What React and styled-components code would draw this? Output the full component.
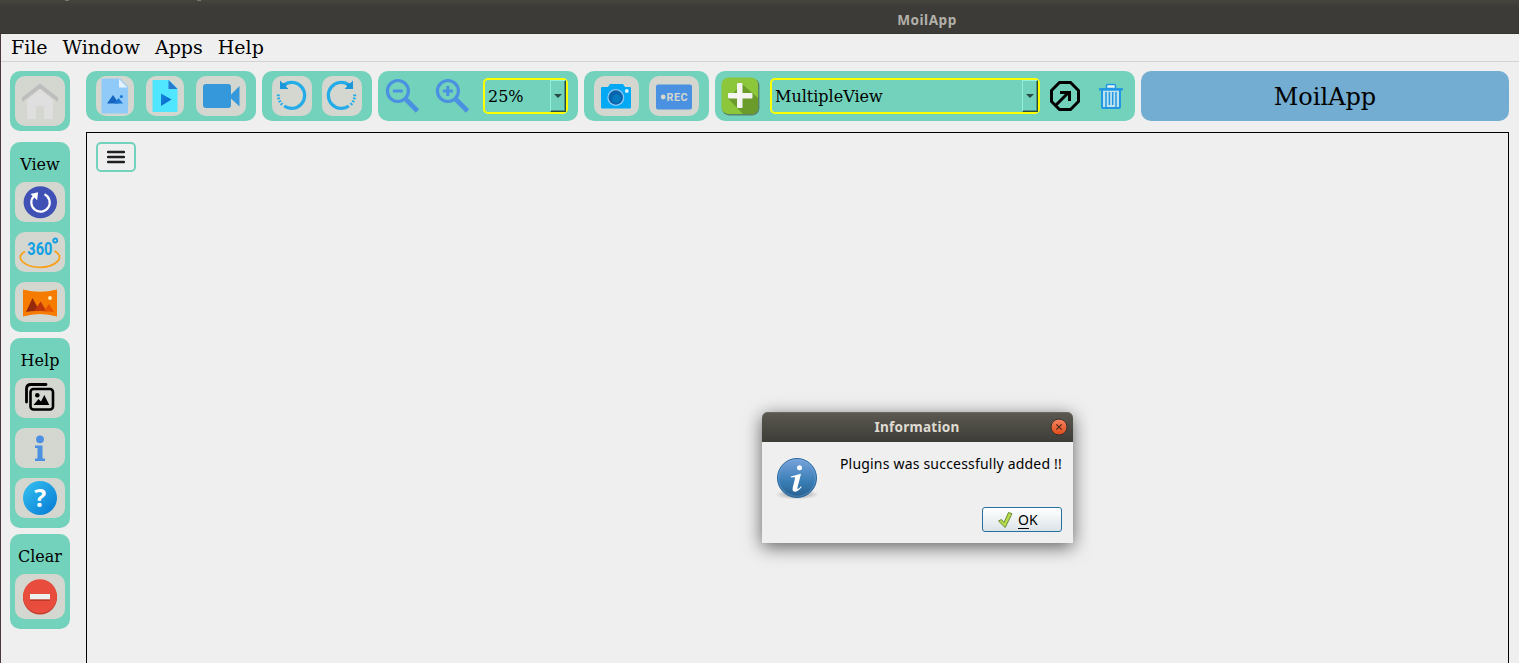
import React from "react";
import styled, { createGlobalStyle } from "styled-components";

const mint = "#73d2bb";
const serif = '"DejaVu Serif", serif';
const sans = '"Noto Sans", "Open Sans", sans-serif';

const Global = createGlobalStyle`
  * { box-sizing: border-box; }
  body { margin: 0; background: #efefef; overflow: hidden; color: #000; }
  button { font: inherit; color: inherit; padding: 0; border: 0; background: none; }
  svg { display: block; flex: none; }
`;

const Window = styled.div`
  height: 100vh;
  display: flex;
  flex-direction: column;
  font-family: ${serif};
`;
const TitleBar = styled.header`
  height: 34px;
  flex: none;
  position: relative;
  display: flex;
  align-items: center;
  justify-content: center;
  padding: 6px 0 0 335px;
  background: linear-gradient(#45443d 0, #3c3b37 7px, #3c3b37 100%);
  border-bottom: 1px solid #35342f;
  color: #b3b0a9;
  font: 700 13.6px ${sans};
  letter-spacing: 0.5px;
`;
const Behind = styled.svg`
  position: absolute;
  left: 0;
  top: 0;
`;
const Frame = styled.div`
  flex: 1;
  min-height: 0;
  display: flex;
  flex-direction: column;
  border-left: 1px solid #4a383c;
`;
const Menu = styled.nav`
  height: 28px;
  flex: none;
  display: flex;
  align-items: center;
  gap: 15px;
  padding: 0 0 1px 10px;
  border-bottom: 1px solid #d3d3d3;
  font-size: 19px;
`;
const Body = styled.div`
  flex: 1;
  min-height: 0;
  display: flex;
  gap: 16px;
  padding: 9px 10px 0 9px;
`;
const Sidebar = styled.aside`
  width: 60px;
  flex: none;
  display: flex;
  flex-direction: column;
  gap: 6px;
`;
const HomePanel = styled.div`
  height: 60px;
  margin-bottom: 5px;
  padding: 5px;
  border-radius: 10px;
  background: ${mint};
`;
const SidePanel = styled.section`
  height: ${(p) => p.$height}px;
  display: flex;
  flex-direction: column;
  align-items: center;
  gap: 10px;
  border-radius: 10px;
  background: ${mint};
`;
const SideTitle = styled.h2`
  height: 30px;
  margin: 0;
  padding-top: 14px;
  font-size: 16px;
  line-height: 18px;
  font-weight: 400;
`;
const Main = styled.main`
  flex: 1;
  min-width: 0;
  display: flex;
  flex-direction: column;
  gap: 11px;
`;
const Toolbar = styled.div`
  height: 50px;
  flex: none;
  display: flex;
  gap: 6px;
`;
const Group = styled.div`
  width: ${(p) => p.$width}px;
  flex: none;
  display: flex;
  align-items: center;
  gap: ${(p) => p.$gap ?? 10}px;
  padding-left: ${(p) => p.$pad ?? 10}px;
  border-radius: 10px;
  background: ${mint};
`;
const IconButton = styled.button`
  width: ${(p) => p.$width ?? 50}px;
  height: ${(p) => p.$height ?? 40}px;
  flex: none;
  display: flex;
  align-items: center;
  justify-content: center;
  border-radius: 10px;
  background: ${(p) => (p.$plain ? "transparent" : "#d3d7cf")};
`;
const ZoomTools = styled.div`
  display: flex;
  gap: 10px;
  margin-right: -2px;
`;
const Combo = styled.div`
  width: ${(p) => p.$width}px;
  height: 36px;
  display: flex;
  align-items: stretch;
  border: 2px solid #ff0;
  border-radius: 5px;
  font-size: 16px;
`;
const ComboValue = styled.span`
  flex: 1;
  padding: 1px 0 0 3px;
  line-height: 32px;
`;
const ComboArrow = styled.span`
  width: 16px;
  display: flex;
  align-items: center;
  justify-content: center;
  border: 1px solid #94f0dc;
  border-right: 1px solid #254b42;
  border-bottom: 1px solid #254b42;
  box-shadow: inset -1px -1px #4e9383;
`;
const AppName = styled.div`
  flex: 1;
  display: flex;
  align-items: center;
  justify-content: center;
  padding-top: 2px;
  border-radius: 10px;
  background: #73add1;
  font-size: 24px;
`;
const Canvas = styled.section`
  flex: 1;
  padding: 9px;
  border: 1px solid #000;
  border-bottom: 0;
`;
const MenuToggle = styled.button`
  width: 40px;
  height: 30px;
  display: flex;
  align-items: center;
  justify-content: center;
  border: 2px solid ${mint};
  border-radius: 5px;
`;
const Dialog = styled.div`
  position: absolute;
  left: 762px;
  top: 412px;
  width: 311px;
  height: 131px;
  display: flex;
  flex-direction: column;
  border-radius: 6px 6px 0 0;
  background: #efefef;
  box-shadow: 0 4px 18px rgba(0, 0, 0, 0.6);
  font-family: ${sans};
  font-size: 14px;
`;
const DialogTitle = styled.div`
  height: 30px;
  display: flex;
  align-items: center;
  padding: 0 5px 0 22px;
  border-radius: 6px 6px 0 0;
  background: linear-gradient(#5b5950, #3d3c37);
  box-shadow: inset 0 1px #6b695f;
  color: #dfdbd2;
  font-weight: 700;
  font-size: 13.6px;
`;
const DialogName = styled.span`
  flex: 1;
  padding-bottom: 2px;
  text-align: center;
  letter-spacing: 0.2px;
`;
const DialogBody = styled.div`
  flex: 1;
  display: flex;
  justify-content: space-between;
  padding: 14px 11px 11px 13px;
`;
const DialogContent = styled.div`
  display: flex;
  flex-direction: column;
  justify-content: space-between;
  align-items: flex-end;
`;
const Message = styled.p`
  margin: 0;
  line-height: 16px;
  letter-spacing: 0.2px;
  white-space: nowrap;
`;
const OkButton = styled.button`
  width: 80px;
  height: 25px;
  display: flex;
  align-items: center;
  gap: 4px;
  padding-left: 14px;
  border: 1px solid #25709f;
  border-radius: 3px;
  background: linear-gradient(#fff, #dce4e9);
`;
const Mnemonic = styled.span`
  text-decoration: underline;
  text-underline-offset: 3px;
`;

const HomeIcon = () => (
  <svg width="50" height="50" viewBox="0 0 50 50">
    <path d="M12 43V24L25 13l13 11v19H29V32q0-2-2-2h-4q-2 0-2 2v11z" fill="#dfdfdf" />
    <path d="M7 21.500 25 7.500 43 21.500V26L25 12.500 7 26z" fill="#bdbdbd" />
  </svg>
);
const ImageFile = () => (
  <svg width="38" height="40" viewBox="0 0 38 40">
    <path d="M5.500 2.500h18.500l8 8v27H5.500z" fill="#90caf9" />
    <path d="M23 3v8.500h8.500z" fill="#e3f2fd" />
    <path d="m11 27.500 6-8.500 6 8.500z" fill="#1565c0" />
    <path d="m18 27.500 4.500-5.500 4.500 5.500z" fill="#1976d2" />
    <circle cx="25.300" cy="20.500" r="1.500" fill="#1976d2" />
  </svg>
);
const VideoFile = () => (
  <svg width="38" height="40" viewBox="0 0 38 40">
    <defs>
      <linearGradient id="play" y2="1"><stop stopColor="#1688db" /><stop offset="1" stopColor="#0762cd" /></linearGradient>
    </defs>
    <path d="M6.500 4H23l8.500 8.500V36h-25z" fill="#50e6ff" />
    <path d="M22.500 4v9h9z" fill="#2979d1" />
    <path d="M15 17.500v12.500l10.500-6.500z" fill="url(#play)" />
  </svg>
);
const Camcorder = () => (
  <svg width="50" height="40" viewBox="0 0 50 40" fill="#3498db">
    <rect x="7" y="8" width="28" height="24" rx="3" />
    <path d="M35 18.500 43.500 10v20.500L35 22.500z" />
  </svg>
);
const Rotate = ({ flip }) => (
  <svg width="40" height="40" viewBox="0 0 40 40" fill="none">
    <g transform={flip ? "translate(39 0) scale(-1 1)" : undefined} stroke="#23ace8">
      <path d="M12.500 8.500a13 13 0 1 1-.3 21.500" strokeWidth="3.200" />
      <path d="M4.800 19.300h3M5.200 22.800l2.800-.7M6.500 26.100l2.600-1.300M8.500 29l2.200-1.900" strokeWidth="1.700" />
      <path d="M8 4.500v8.500h8.500L14 10.500l1-2.500-4.500-1z" fill="#1a98da" stroke="none" />
    </g>
  </svg>
);
const Zoom = ({ plus }) => (
  <svg width="40" height="40" viewBox="0 0 40 40" fill="none" stroke="#4b91e2">
    <circle cx="12.900" cy="15" r="10.500" strokeWidth="3.200" />
    <path d={plus ? "M7.800 15h10M12.800 10v10" : "M7.800 15h10"} strokeWidth="3" />
    <path d="m21 23.500 11.500 11.500" strokeWidth="4.600" />
  </svg>
);
const Caret = () => (
  <svg width="8" height="4" viewBox="0 0 8 4"><path d="M0 0h8L4 4z" fill="#264c43" /></svg>
);
const Camera = () => (
  <svg width="45" height="40" viewBox="0 0 45 40">
    <path d="M7 12q0-1 1-1h6l2-3h13l2 3h5q1 0 1 1v19q0 1.500-1 1.500H8q-1 0-1-1.500z" fill="#03a9f4" />
    <circle cx="21.800" cy="21.500" r="8.500" fill="#90caf9" />
    <circle cx="21.800" cy="21.500" r="7.200" fill="#0b64aa" />
    <circle cx="22.500" cy="22.500" r="4.300" fill="#0479bf" />
    <circle cx="32.800" cy="15" r="1.900" fill="#e3f2fd" />
  </svg>
);
const Rec = () => (
  <svg width="50" height="40" viewBox="0 0 50 40">
    <rect x="7" y="8.500" width="36" height="25" rx="2" fill="#4b91e2" />
    <circle cx="14.200" cy="21" r="2.400" fill="#d3d7cf" />
    <text x="17.500" y="25" fontFamily="Roboto, sans-serif" fontWeight="700" fontSize="11.500" letterSpacing="0.500" textLength="21.500" lengthAdjust="spacingAndGlyphs" fill="#d3d7cf">REC</text>
  </svg>
);
const AddIcon = () => (
  <svg width="40" height="40" viewBox="0 0 40 40">
    <rect x="1.900" y="2.400" width="37.500" height="37" rx="7" fill="#506a4b" opacity=".75" />
    <rect x="1.500" y="1.500" width="36.500" height="36.500" rx="7" fill="#8cc63a" />
    <path d="M22 8l16 14v9q0 7-7 7h-8L8 22.500z" fill="#6a9b2b" />
    <path d="M17 8q0-1 1-1h3.500q1 0 1 1v9h9q1 0 1 1v3.500q0 1-1 1h-9v8.500q0 1-1 1h-3.500q-1 0-1-1v-8.500H9q-1 0-1-1v-3.500q0-1 1-1h8z" fill="#f4f5f2" />
  </svg>
);
const OpenApp = () => (
  <svg width="30" height="30" viewBox="0 0 30 30" fill="none" stroke="#000" strokeWidth="3">
    <path d="M9.500 1.500h11l8 8v11l-8 8h-11l-8-8v-11z" />
    <path d="M5.500 24.500 19 11M10 11.500h9.500V20" />
  </svg>
);
const Trash = () => (
  <svg width="26" height="26" viewBox="0 0 26 26" fill="none" stroke="#2196e3">
    <path d="M4 6.500h18v17.500q0 1-1 1H5q-1 0-1-1z" fill="#bce3ee" strokeWidth="2" />
    <path d="M1 6.300h24" strokeWidth="2.200" />
    <path d="M8.500 5.500V2.500q0-1 1-1h7q1 0 1 1v3z" fill="#e8f7f7" strokeWidth="1.500" />
    <path d="M8 9v15M11.400 9v13M14.700 9v13M18 9v15" strokeWidth="1.500" />
  </svg>
);
const Reset = () => (
  <svg width="50" height="40" viewBox="0 0 50 40">
    <ellipse cx="25.300" cy="20.200" rx="16.700" ry="16" fill="#3f51b5" />
    <path d="M29.500 12.200A9.200 9.200 0 1 1 19 14" fill="none" stroke="#fff" strokeWidth="2.200" />
    <path d="M15.500 12 23 10.200l-.8 8z" fill="#fff" />
  </svg>
);
const Degrees = () => (
  <svg width="50" height="40" viewBox="0 0 50 40">
    <text x="12.300" y="22.600" fontFamily="Roboto, sans-serif" fontWeight="700" fontSize="17.500" textLength="25" lengthAdjust="spacingAndGlyphs" fill="#109fe5">360</text>
    <circle cx="40.200" cy="8.500" r="2" fill="none" stroke="#109fe5" strokeWidth="1.800" />
    <path d="M10 19.500C-2 26 11 35.300 25 35.300S52 26 39.500 19" fill="none" stroke="#f9a11b" strokeWidth="1.800" />
  </svg>
);
const Panorama = () => (
  <svg width="50" height="40" viewBox="0 0 50 40">
    <path d="M8 7.500q17 4.500 34 0v27q-17-5-34 0z" fill="#f57c00" />
    <path d="m11 30 6.500-14 7 13q-7-.5-13.500 1z" fill="#94290b" />
    <path d="m19 29 6.700-9.500 6 10q-6-1-12.700-.5z" fill="#bf360c" />
    <path d="m29 29 5-7 5 8z" fill="#e65100" />
    <circle cx="35" cy="16" r="1.900" fill="#fff3c0" />
  </svg>
);
const Gallery = () => (
  <svg width="50" height="40" viewBox="0 0 50 40" fill="none" stroke="#000" strokeLinecap="round">
    <path d="M11.500 24V11q0-4.500 4.500-4.500H31" strokeWidth="2.800" />
    <rect x="15.500" y="11" width="22.500" height="20.500" rx="3" strokeWidth="2.600" />
    <circle cx="22.300" cy="17.300" r="2.300" fill="#000" stroke="none" />
    <path d="m18.500 27 5-6 2.500 2.500L29.300 17l5 10z" fill="#000" stroke="none" />
  </svg>
);
const Info = () => (
  <svg width="50" height="40" viewBox="0 0 50 40" fill="#4b91e2">
    <circle cx="25" cy="11.300" r="3.900" />
    <path d="M20 17.500h7.500V30.500H30V33H20v-2.500h2.500V20H20z" />
  </svg>
);
const Question = () => (
  <svg width="50" height="40" viewBox="0 0 50 40">
    <defs>
      <linearGradient id="ask" x2="1" y2="1"><stop offset=".15" stopColor="#2fb8ec" /><stop offset=".85" stopColor="#0b82d8" /></linearGradient>
    </defs>
    <circle cx="25" cy="20" r="17" fill="url(#ask)" />
    <text x="25.300" y="28.700" textAnchor="middle" fontFamily="Open Sans, sans-serif" fontWeight="700" fontSize="25" fill="#fff">?</text>
  </svg>
);
const Clear = () => (
  <svg width="50" height="45" viewBox="0 0 50 45">
    <circle cx="25" cy="23.500" r="17" fill="#c0392b" />
    <circle cx="25" cy="22.200" r="17" fill="#e74c3c" />
    <path d="M15 21h20v6H15z" fill="#c0392b" />
    <path d="M15 20h20v5.300H15z" fill="#ecf0f1" />
  </svg>
);
const Bars = () => (
  <svg width="18" height="14" viewBox="0 0 18 14"><path d="M1 2h16M1 7h16M1 12h16" stroke="#231f20" strokeWidth="2.300" strokeLinecap="round" /></svg>
);
const CloseIcon = () => (
  <svg width="18" height="18" viewBox="0 0 18 18">
    <defs><linearGradient id="close" y2="1" x2="0"><stop stopColor="#f68462" /><stop offset="1" stopColor="#df4b16" /></linearGradient></defs>
    <circle cx="9" cy="9" r="8" fill="url(#close)" stroke="#33322e" />
    <path d="m6.300 6.300 5.400 5.400m0-5.400-5.400 5.400" stroke="#4b2a1b" strokeWidth="1.200" />
  </svg>
);
const InfoBadge = () => (
  <svg width="44" height="44" viewBox="0 0 44 44">
    <defs>
      <linearGradient id="info" x2="0" y2="1"><stop stopColor="#78a3dc" /><stop offset=".6" stopColor="#397db5" /><stop offset="1" stopColor="#27608e" /></linearGradient>
      <radialGradient id="shade"><stop stopColor="#000" stopOpacity=".4" /><stop offset="1" stopColor="#000" stopOpacity="0" /></radialGradient>
    </defs>
    <ellipse cx="22" cy="38.500" rx="22" ry="5" fill="url(#shade)" />
    <circle cx="22" cy="22" r="19.500" fill="url(#info)" stroke="#2868a0" />
    <circle cx="22" cy="22" r="18.300" fill="none" stroke="#83aedb" strokeOpacity=".4" />
    <circle cx="24.500" cy="11.700" r="2.500" fill="#fff" />
    <path d="M15.800 20.500 26 17.700 22.500 31.500c-.5 2 .8 2 3.300-1.200l.9.700c-4.300 6.200-10.300 6.200-9 .8L20 22.500c.4-1.300-.5-1.500-4.200-1z" fill="#fff" />
  </svg>
);
const Check = () => (
  <svg width="17" height="18" viewBox="0 0 17 18"><path d="M1.500 10 4.500 8.500 7 11.500 11.500 1.500l3.500 1.200L8.200 16.500z" fill="#b4dc4b" stroke="#6e8d34" strokeLinejoin="round" /></svg>
);

const Select = ({ width, children }) => (
  <Combo $width={width}>
    <ComboValue>{children}</ComboValue>
    <ComboArrow><Caret /></ComboArrow>
  </Combo>
);

export default function App() {
  return (
    <Window>
      <Global />
      <TitleBar>
        <Behind width="220" height="2"><path d="M65 0h4M197 0h4" stroke="#aaa79c" /></Behind>
        MoilApp
      </TitleBar>
      <Frame>
        <Menu><span>File</span><span>Window</span><span>Apps</span><span>Help</span></Menu>
        <Body>
          <Sidebar>
            <HomePanel><IconButton $height={50}><HomeIcon /></IconButton></HomePanel>
            <SidePanel $height={190}>
              <SideTitle>View</SideTitle>
              <IconButton><Reset /></IconButton>
              <IconButton><Degrees /></IconButton>
              <IconButton><Panorama /></IconButton>
            </SidePanel>
            <SidePanel $height={190}>
              <SideTitle>Help</SideTitle>
              <IconButton><Gallery /></IconButton>
              <IconButton><Info /></IconButton>
              <IconButton><Question /></IconButton>
            </SidePanel>
            <SidePanel $height={95}>
              <SideTitle>Clear</SideTitle>
              <IconButton $height={45}><Clear /></IconButton>
            </SidePanel>
          </Sidebar>
          <Main>
            <Toolbar>
              <Group $width={170} $gap={12}>
                <IconButton $width={38}><ImageFile /></IconButton>
                <IconButton $width={38}><VideoFile /></IconButton>
                <IconButton><Camcorder /></IconButton>
              </Group>
              <Group $width={110}>
                <IconButton $width={40}><Rotate /></IconButton>
                <IconButton $width={40}><Rotate flip /></IconButton>
              </Group>
              <Group $width={200} $pad={7}>
                <ZoomTools>
                  <IconButton $plain $width={40}><Zoom /></IconButton>
                  <IconButton $plain $width={40}><Zoom plus /></IconButton>
                </ZoomTools>
                <Select width={85}>25%</Select>
              </Group>
              <Group $width={125}>
                <IconButton $width={45}><Camera /></IconButton>
                <IconButton><Rec /></IconButton>
              </Group>
              <Group $width={420} $pad={5}>
                <IconButton $plain $width={40}><AddIcon /></IconButton>
                <Select width={270}>MultipleView</Select>
                <IconButton $plain $width={30}><OpenApp /></IconButton>
                <IconButton $plain $width={42}><Trash /></IconButton>
              </Group>
              <AppName>MoilApp</AppName>
            </Toolbar>
            <Canvas>
              <MenuToggle aria-label="Menu"><Bars /></MenuToggle>
            </Canvas>
          </Main>
        </Body>
      </Frame>
      <Dialog role="dialog">
        <DialogTitle><DialogName>Information</DialogName><CloseIcon /></DialogTitle>
        <DialogBody>
          <InfoBadge />
          <DialogContent>
            <Message>Plugins was successfully added !!</Message>
            <OkButton><Check /><span><Mnemonic>O</Mnemonic>K</span></OkButton>
          </DialogContent>
        </DialogBody>
      </Dialog>
    </Window>
  );
}
